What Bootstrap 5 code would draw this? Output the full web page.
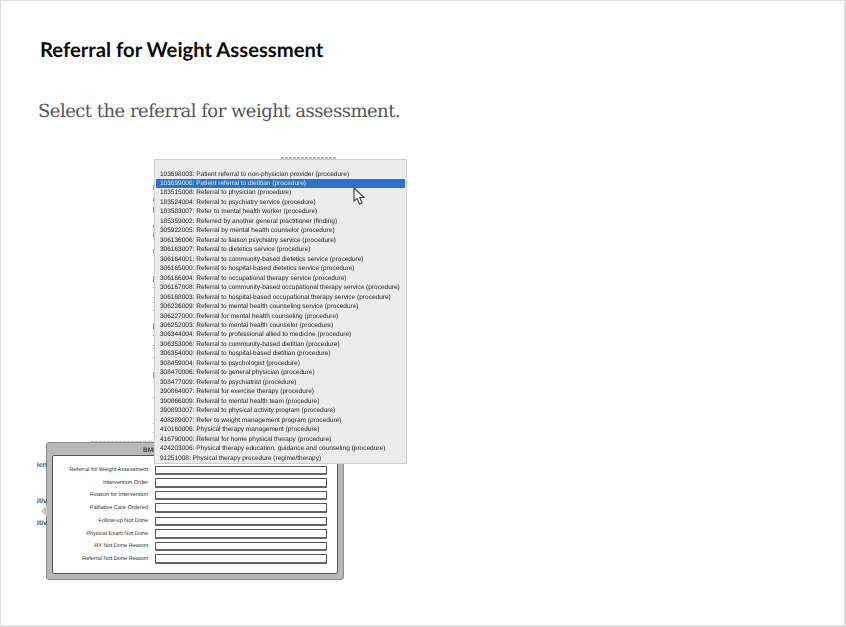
<!DOCTYPE html>
<html lang="en">

<head>
    <meta charset="UTF-8" />
    <meta name="viewport" content="width=device-width, initial-scale=1.0" />
    <title>Referral for Weight Assessment</title>
    <link href="https://cdn.jsdelivr.net/npm/bootstrap@5.3.0/dist/css/bootstrap.min.css" rel="stylesheet" />
    <style>
        html, body {
            height: 100%;
            overflow: hidden;
        }

        body {
            background: #fff;
            text-rendering: geometricPrecision;
        }

        .slide-frame {
            height: 627px;
            border: 1px solid #ddd;
            border-width: 1px 2px 2px 1px;
            padding: 36px 0 0 38px;
        }

        .slide-title {
            font-family: Lato, sans-serif;
            font-weight: 700;
            font-size: 20.25px;
            line-height: 27px;
            color: #0b0b0b;
            margin: 0 0 0 1px;
        }

        .slide-prompt {
            font-family: "DejaVu Serif", serif;
            font-size: 18px;
            letter-spacing: -0.52px;
            line-height: 26px;
            color: #555;
            margin: 35px 0 0 -1px;
        }

        .shot-area {
            position: relative;
            display: flow-root;
            width: 400px;
            filter: blur(0.4px);
            font-family: "Liberation Sans", sans-serif;
        }

        /* the dialog sits in flow, the open dropdown lies over it */
        .bmi-dialog {
            width: 298px;
            height: 138px;
            margin: 317px 0 0 7px;
            padding: 12px 5px 5px;
            background: #b8b8b8;
            border: 1px solid #8d8d8d;
            border-radius: 3px;
            position: relative;
        }

        .bmi-title {
            font-size: 6.6px;
            font-weight: 700;
            color: #444;
            line-height: 8px;
            position: absolute;
            top: 4px;
            left: 96px;
        }

        .bmi-inner {
            height: 100%;
            background: #fff;
            border: 1px solid #555;
            border-radius: 2px;
            padding: 8px 10px 0 0;
        }

        .bmi-row {
            height: 12.5px;
        }

        .bmi-row.gap-before {
            margin-top: 1.4px;
        }

        .bmi-label {
            width: 95px;
            font-size: 5.6px;
            color: #333;
            text-align: right;
            white-space: nowrap;
            margin-right: 7px;
        }

        .bmi-input {
            width: 172px;
            height: 9.5px;
            background: #fff;
            border: 1px solid #555;
            border-bottom: 2px solid #666;
            border-radius: 1px;
        }

        .bmi-notch {
            position: absolute;
            left: -6px;
            top: 62px;
            width: 0;
            height: 0;
            border: 6px solid transparent;
            border-left-width: 0;
            border-right-color: #c4c4c4;
        }

        .side-word {
            position: absolute;
            left: -10px;
            font-size: 7px;
            font-weight: 700;
            color: #2f5590;
            width: 10px;
            overflow: hidden;
            line-height: 8px;
        }

        .referral-menu {
            position: absolute;
            top: 34px;
            left: 115px;
            width: 253px;
            height: 305px;
            background: #ececec;
            border: 1px solid #cfcfcf;
            padding: 9.5px 1px 0;
            color: #222;
            font-size: 6.53px;
        }

        .referral-item {
            height: 9.47px;
            line-height: 10.4px;
            padding-left: 4px;
            white-space: nowrap;
        }

        .referral-item.is-active {
            background: #2b73c8;
            color: #dbe6f3;
        }

        .menu-cursor {
            position: absolute;
            left: 198px;
            top: 27px;
        }

        /* bits of the form underneath that peek out round the dropdown */
        .peek-tick {
            position: absolute;
            left: 114px;
            width: 1px;
            background: #a0a0a0;
        }

        .peek-text {
            position: absolute;
            background: repeating-linear-gradient(90deg, #b5bac2 0 3px, transparent 3px 4px);
        }
    </style>
</head>

<body class="m-0">
    <div class="slide-frame">
        <h1 class="slide-title">Referral for Weight Assessment</h1>
        <p class="slide-prompt">Select the referral for weight assessment.</p>

        <div class="shot-area" id="shot">
            <span class="peek-text" style="left:242px;top:32px;width:55px;height:2px"></span>
            <span class="peek-text" style="left:52px;top:316px;width:62px;height:1px"></span>

            <div class="bmi-dialog">
                <span class="side-word" style="top:19px">ien</span>
                <span class="side-word" style="top:55px">itiv</span>
                <span class="side-word" style="top:77px">itiv</span>
                <span class="bmi-notch"></span>
                <span class="bmi-title">BMI</span>
                <div class="bmi-inner" id="bmi-rows"></div>
            </div>

            <div class="referral-menu" id="menu">
                <svg class="menu-cursor" width="14" height="18" viewBox="0 0 14 18">
                    <path d="M1 1 L1 14 L4 11.5 L6.5 17 L9 16 L6.8 10.5 L11 10.5 Z" fill="#fff" stroke="#444" stroke-width="1.2" />
                </svg>
            </div>
        </div>
    </div>

    <script>
        const referrals = [
            "103698003: Patient referral to non-physician provider (procedure)",
            "103699006: Patient referral to dietitian (procedure)",
            "183515008: Referral to physician (procedure)",
            "183524004: Referral to psychiatry service (procedure)",
            "183583007: Refer to mental health worker (procedure)",
            "185359002: Referred by another general practitioner (finding)",
            "305922005: Referral by mental health counselor (procedure)",
            "306136006: Referral to liaison psychiatry service (procedure)",
            "306163007: Referral to dietetics service (procedure)",
            "306164001: Referral to community-based dietetics service (procedure)",
            "306165000: Referral to hospital-based dietetics service (procedure)",
            "306166004: Referral to occupational therapy service (procedure)",
            "306167008: Referral to community-based occupational therapy service (procedure)",
            "306168003: Referral to hospital-based occupational therapy service (procedure)",
            "306226009: Referral to mental health counseling service (procedure)",
            "306227000: Referral for mental health counseling (procedure)",
            "306252003: Referral to mental health counselor (procedure)",
            "306344004: Referral to professional allied to medicine (procedure)",
            "306353006: Referral to community-based dietitian (procedure)",
            "306354000: Referral to hospital-based dietitian (procedure)",
            "308459004: Referral to psychologist (procedure)",
            "308470006: Referral to general physician (procedure)",
            "308477009: Referral to psychiatrist (procedure)",
            "390864007: Referral for exercise therapy (procedure)",
            "390866009: Referral to mental health team (procedure)",
            "390893007: Referral to physical activity program (procedure)",
            "408289007: Refer to weight management program (procedure)",
            "410160006: Physical therapy management (procedure)",
            "416790000: Referral for home physical therapy (procedure)",
            "424203006: Physical therapy education, guidance and counseling (procedure)",
            "91251008: Physical therapy procedure (regime/therapy)"
        ];

        const fields = [
            "Referral for Weight Assessment", "Intervention Order", "Reason for Intervention",
            "Palliative Care Ordered", "Follow-up Not Done", "Physical Exam Not Done",
            "RX Not Done Reason", "Referral Not Done Reason"
        ];

        // y, height of each sliver left of the dropdown (relative to shot-area)
        const ticks = [[60, 5], [73, 4], [82, 6], [100, 3], [107, 6], [124, 4], [151, 7], [162, 1], [172, 1],
            [177, 1], [185, 1], [198, 7], [210, 1], [220, 1], [223, 1], [232, 1], [247, 6], [272, 1], [298, 1], [307, 1]];

        let shot = document.getElementById("shot");
        ticks.forEach(function (t) {
            let tick = document.createElement("span");
            tick.className = "peek-tick";
            tick.style.top = t[0] + "px";
            tick.style.height = t[1] + "px";
            shot.appendChild(tick);
        });

        let menu = document.getElementById("menu");
        let cursor = menu.querySelector(".menu-cursor");
        referrals.forEach(function (text, i) {
            let item = document.createElement("div");
            item.className = "referral-item" + (i === 1 ? " is-active" : "");
            item.textContent = text;
            menu.insertBefore(item, cursor);
        });

        let rows = document.getElementById("bmi-rows");
        fields.forEach(function (text, i) {
            let row = document.createElement("div");
            row.className = "bmi-row d-flex align-items-center" + (i === 4 ? " gap-before" : "");
            row.innerHTML = `<span class="bmi-label">${text}</span><span class="bmi-input"></span>`;
            rows.appendChild(row);
        });
    </script>

    <script src="https://cdn.jsdelivr.net/npm/bootstrap@5.3.0/dist/js/bootstrap.bundle.min.js"></script>
</body>

</html>
